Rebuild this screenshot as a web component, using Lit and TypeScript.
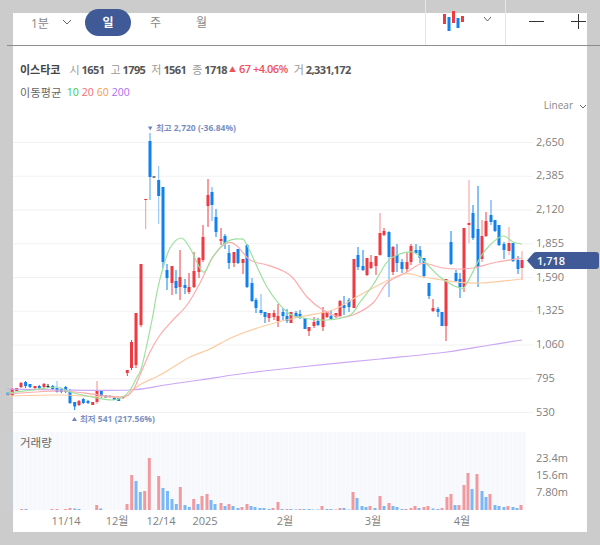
import { LitElement, html, css, svg } from 'lit';
import { customElement } from 'lit/decorators.js';

type Candle = [number, number, number, number, number, string, number?];

const R = '#ee3b42';
const B = '#1180f0';
const D = '#333333';

// x, body top, body bottom, wick top, wick bottom, colour, wick opacity
const candles: Candle[] = [
  [8, 392.5, 395, 392, 396, B], [12.3, 389, 395, 388, 396, R], [16.7, 388, 391, 388, 391, R],
  [21, 383, 387, 382, 388, R], [25.6, 382, 386, 381, 388, B], [30, 384, 387, 384, 388, B],
  [35, 386, 388, 386, 389, R], [39.3, 386, 388, 385, 389, B], [44, 384, 387, 383, 388, R],
  [48, 386, 387, 384, 388, D], [52.7, 386, 389, 385, 390, B], [57, 388, 392, 381, 393, B, 0.5],
  [61.3, 389, 392, 388, 393, B], [65.7, 387, 392, 386, 393, B], [70, 392, 403, 389, 404, B],
  [74.7, 402, 406.5, 402, 410, B], [79, 401, 405, 400, 406, R], [83.3, 399, 403, 398, 404, B],
  [88, 401, 403, 400, 404, B], [92.7, 402, 405, 402, 405, R], [97, 390, 402, 381, 404, R, 0.6],
  [101.3, 391, 396, 390, 398, B], [105.7, 395, 398, 395, 398, B], [110, 396, 397, 395, 398, B],
  [114.3, 397, 400, 397, 400, B], [118.7, 398, 401, 398, 401, B], [123, 396, 398, 396, 399, R],
  [127.3, 370, 373, 370, 376, R], [131.5, 342, 368, 340, 370, R], [136, 313, 365, 313, 368, R],
  [141, 264, 325, 264, 327, R], [145.7, 199, 200, 199, 229, R, 0.55], [150, 141, 177, 133, 200, B, 0.75],
  [154, 176.5, 177.5, 176.5, 177.5, D], [158.7, 180, 196, 166, 224, B, 0.5], [163, 187, 262, 187, 268, B],
  [167, 270, 278, 264, 290, B], [172, 266, 283, 266, 295, R], [176, 281, 288, 270, 294, B],
  [180, 277, 287, 250, 300, R], [185, 285, 288, 279, 294, B], [189, 287, 292, 273, 294, R],
  [194, 271, 287, 252, 288, R], [199, 258, 272, 257, 278, R], [203, 237, 260, 225, 262, R],
  [208, 195, 206, 179, 227, R], [212, 192, 205, 187, 221, B, 0.7], [216, 217, 232, 209, 237, B],
  [221, 239, 241, 228, 245, R], [225, 236, 244, 234, 249, B], [229, 253, 263, 245, 269, B],
  [234, 252, 263, 252, 267, R], [238, 249, 263, 249, 264, B], [243, 259, 263, 259, 274, R],
  [247, 245, 287, 244, 288, B], [252, 283, 301, 278, 302, B, 0.8], [256, 300, 308, 298, 313, B],
  [261, 310, 313, 294, 315, B, 0.6], [265, 312, 317, 312, 323, B], [269, 313, 318, 313, 322, R],
  [274, 313, 317, 310, 320, R], [278, 316, 321, 304, 327, R], [283, 312, 316, 308, 320, B],
  [287, 316, 321, 309, 323, B], [291, 312, 323, 312, 323, R], [296, 313, 317, 311, 318, B],
  [300, 314, 318, 310, 319, B], [305, 318, 329, 318, 329, B], [309, 327, 331, 327, 336, R],
  [314, 322, 326, 317, 328, R], [318, 321, 325, 318, 326, B], [323, 312, 327, 307, 331, R],
  [327, 311, 317, 311, 318, R], [331, 316, 319, 310, 319, B], [336, 313, 317, 313, 318, R],
  [340, 301, 316, 300, 316, R], [344, 305, 308, 296, 315, B], [349, 300, 307, 298, 312, B],
  [354, 259, 308, 259, 308, R], [358, 255, 267, 247, 270, B], [363, 266, 270, 250, 271, B],
  [367, 258, 275, 258, 276, R], [371, 262, 268, 255, 269, R], [376, 256, 266, 256, 275, R],
  [380, 233, 255, 213, 256, R, 0.6], [384, 231, 235, 228, 236, R], [389, 232, 257, 231, 297, B, 0.7],
  [393, 247, 272, 246, 275, R], [397, 255, 263, 244, 272, B], [402, 262, 269, 259, 273, B],
  [407, 262, 269, 253, 272, R], [411, 246, 262, 244, 265, R], [416, 250, 253, 244, 254, B],
  [420, 250, 258, 246, 263, B], [424, 258, 276, 258, 278, B], [429, 283, 296, 283, 299, B],
  [433, 308, 311, 299, 312, R], [438, 309, 312, 307, 317, B], [442, 312, 326, 312, 326, B],
  [446, 279, 326, 279, 341, R], [451, 242, 264, 231, 265, B], [456, 273, 281, 270, 282, B],
  [460, 279, 287, 273, 298, B], [464, 228, 287, 228, 292, R], [469, 223, 225, 180, 243, R, 0.5],
  [473, 213, 238, 205, 240, B], [478, 229, 267, 186, 287, B], [482, 236, 259, 220, 262, R, 0.7],
  [486, 221, 236, 212, 237, R], [491, 215, 222, 200, 225, B, 0.8], [495, 220, 231, 220, 232, B],
  [499, 225, 245, 225, 246, B], [504, 244, 250, 242, 259, B], [509, 243, 251, 227, 255, R, 0.5],
  [513, 243, 261, 243, 262, B], [518, 260, 269, 256, 274, B], [522, 260, 268, 251, 280, R, 0.5],
];

// x, height, r or b
const volumes: [number, number, string][] = [
  [21.7, 1, 'r'], [26, 1, 'b'], [52, 1, 'r'], [57, 1, 'r'], [65.7, 1, 'r'], [70, 2, 'r'], [74.7, 1.5, 'b'], [79, 1, 'b'],
  [96.7, 5, 'r'], [100.7, 1.5, 'b'], [127, 6, 'r'], [131.7, 35, 'r'], [136, 29, 'b'], [140.3, 18, 'b'], [144.7, 19, 'r'],
  [149.3, 52, 'r'], [158.7, 34, 'r'], [163, 22, 'b'], [167.5, 19, 'b'], [172, 11, 'b'], [176.3, 6, 'b'], [180.3, 23, 'r'],
  [185, 5, 'b'], [189.3, 3, 'b'], [193.7, 11, 'r'], [198, 6, 'b'], [202, 14, 'r'], [207, 16, 'r'], [211, 10, 'b'],
  [215, 6, 'b'], [221, 7, 'r'], [225, 4, 'b'], [229, 6, 'r'], [233, 4, 'b'], [238, 2, 'b'], [242, 3, 'r'], [247, 6, 'r'],
  [251, 4, 'b'], [255, 3, 'b'], [260, 2, 'b'], [264, 2, 'b'], [269, 1, 'b'], [273, 2, 'r'], [278, 8, 'r'], [282, 1, 'b'],
  [287, 1, 'r'], [291, 1, 'b'], [296, 0.5, 'b'], [300, 1, 'r'], [304, 1, 'b'], [309, 1, 'b'], [313, 0.5, 'b'], [318, 0.5, 'b'],
  [322, 4, 'r'], [327, 1, 'b'], [331, 1, 'b'], [336, 0.5, 'r'], [340, 2, 'r'], [344, 2, 'b'], [349, 0.5, 'b'], [353, 18, 'r'],
  [357, 12, 'b'], [362, 4, 'b'], [366, 3, 'b'], [370, 4, 'r'], [375, 2, 'b'], [380, 14, 'r'], [384, 4, 'b'], [389, 7, 'r'],
  [393, 4, 'b'], [397, 3, 'b'], [402, 1, 'b'], [406, 1, 'r'], [411, 2, 'r'], [415, 4, 'r'], [419, 2, 'b'], [424, 3, 'r'],
  [428, 4, 'r'], [433, 1.5, 'b'], [438, 1, 'b'], [442, 2, 'r'], [447, 13, 'r'], [451, 16, 'r'], [455, 5, 'b'], [459, 5, 'r'],
  [464, 25, 'r'], [468, 37, 'r'], [472, 21, 'b'], [477, 36, 'r'], [482, 19, 'b'], [486, 13, 'b'], [490, 16, 'r'], [495, 5, 'b'],
  [499, 4, 'b'], [504, 3, 'b'], [508, 4, 'r'], [513, 3, 'b'], [517, 2, 'b'], [521, 5, 'r'],
];

const ma10 = [[7, 393], [33, 390], [57, 387], [70, 392], [97, 398], [113, 400], [123, 397], [130, 390], [137, 377], [142, 366], [152, 320], [157, 292], [163, 268], [170, 248], [181, 238], [190, 248], [203, 272], [212, 258], [225, 243], [240, 239], [247, 245], [267, 287], [287, 312], [303, 318], [327, 320], [350, 315], [360, 302], [373, 285], [387, 262], [397, 255], [413, 252], [423, 260], [440, 277], [460, 288], [467, 283], [480, 258], [490, 245], [503, 236], [513, 242], [522, 244]];
const ma20 = [[7, 394], [60, 391], [100, 395], [123, 397], [133, 390], [140, 375], [150, 352], [160, 335], [173, 320], [187, 305], [200, 283], [213, 257], [227, 243], [237, 246], [250, 260], [267, 265], [283, 271], [293, 278], [307, 297], [323, 310], [340, 317], [353, 315], [373, 303], [387, 283], [407, 272], [420, 264], [428, 264], [443, 268], [457, 269], [473, 268], [497, 262], [522, 258]];
const ma60 = [[7, 396], [60, 395], [120, 397], [133, 389], [143, 383], [160, 375], [175, 366], [190, 357], [210, 349], [233, 337], [267, 325], [300, 317], [333, 310], [353, 299], [373, 288], [403, 274], [423, 277], [457, 282], [480, 283], [522, 279]];
const ma200 = [[7, 389], [60, 390], [130, 390], [165, 385], [200, 380], [240, 374], [300, 367], [380, 359], [447, 352], [490, 345], [522, 340]];

const priceTicks = [2650, 2385, 2120, 1855, 1590, 1325, 1060, 795, 530].map((v, i): [number, number] => [v, 142.5 + 33.75 * i]);
const dateTicks: [string, number][] = [['11/14', 66], ['12월', 117], ['12/14', 161], ['2025', 205], ['2월', 285], ['3월', 373], ['4월', 462]];
const volTicks: [string, number][] = [['23.4m', 458], ['15.6m', 475], ['7.80m', 492]];

// smooth line through the points
function smooth(p: number[][]) {
  let d = `M${p[0][0]} ${p[0][1]}`;
  for (let i = 0; i < p.length - 1; i++) {
    const a = p[Math.max(i - 1, 0)], b = p[i], c = p[i + 1], e = p[Math.min(i + 2, p.length - 1)];
    const c1 = [b[0] + (c[0] - a[0]) / 6, b[1] + (c[1] - a[1]) / 6];
    const c2 = [c[0] - (e[0] - b[0]) / 6, c[1] - (e[1] - b[1]) / 6];
    d += `C${c1[0].toFixed(1)} ${c1[1].toFixed(1)} ${c2[0].toFixed(1)} ${c2[1].toFixed(1)} ${c[0]} ${c[1]}`;
  }
  return d;
}

const chevron = (x: number, y: number, w: number, h: number) =>
  html`<svg class="chev" width=${w + 2} height=${h + 2} viewBox="0 0 ${w + 2} ${h + 2}" style="margin-left:${x}px;margin-top:${y}px"><path d="M1 1L${w / 2 + 1} ${h + 1}L${w + 1} 1" fill="none" stroke="#666" stroke-width="1"/></svg>`;

@customElement('app-root')
export class AppRoot extends LitElement {
  static styles = css`
    :host {
      display: block;
      width: 600px;
      height: 545px;
      background: #cccccc;
      overflow: hidden;
      font-family: "Open Sans", "Noto Sans CJK KR", sans-serif;
    }
    .panel {
      margin: 13px 13px 0;
      height: 519px;
      background: #fff;
      display: flex;
      flex-direction: column;
    }
    .toolbar {
      margin: -13px -13px 0 -6px;
      height: 45px;
      border-bottom: 1px solid #8a8d92;
      display: flex;
      color: #888;
      font-size: 12px;
      flex: none;
    }
    .tabs {
      width: 418px;
      display: flex;
      align-items: center;
      padding-left: 24px;
      box-sizing: border-box;
    }
    .tab-min { width: 25px; margin-top: 1px; }
    .pill {
      width: 46px;
      height: 27px;
      margin: -1px 0 0 13px;
      border-radius: 14px;
      background: #3f5a96;
      color: #fff;
      font-weight: 600;
      font-size: 12px;
      line-height: 27px;
      text-align: center;
    }
    .tab { font-size: 12px; margin-top: -1px; }
    .tab.w { margin-left: 19px; }
    .tab.m { margin-left: 35px; }
    .type {
      width: 81px;
      box-sizing: border-box;
      border-left: 1px solid #e6e6e6;
      border-right: 1px solid #e6e6e6;
      display: flex;
      padding: 11px 0 0 17px;
    }
    .zoom {
      flex: 1;
      display: flex;
      gap: 27px;
      padding: 14px 0 0 23px;
    }
    .chev { display: block; flex: none; }
    .info {
      display: flex;
      align-items: center;
      font-size: 11px;
      color: #999;
      height: 15px;
      margin: 15px 0 0 7px;
      white-space: nowrap;
    }
    .info b { color: #555; font-weight: 700; margin-left: 2px; letter-spacing: -0.6px; }
    .info .name { color: #444; margin: 0 9px 0 0; font-weight: 700; }
    .info .pair { margin-right: 6px; }
    .info .up { color: #f0505a; font-weight: 600; letter-spacing: -0.5px; }
    .info .tri { font-size: 7px; margin: 0 3px 0 -4px; letter-spacing: 0; }
    .ma {
      display: flex;
      gap: 3px;
      font-size: 10.5px;
      color: #666;
      height: 15px;
      align-items: center;
      margin: 8px 0 0 7px;
    }
    .ma .t { margin-right: 2px; font-size: 11px; letter-spacing: 0.3px; }
    .scale {
      display: flex;
      justify-content: flex-end;
      align-items: center;
      gap: 6px;
      font-size: 10px;
      color: #888;
      height: 14px;
      margin-top: -1px;
      padding-bottom: 1px;
    }
    .chart {
      margin-left: -13px;
      display: block;
      overflow: visible;
      flex: none;
    }
    text { font-family: "Open Sans", "Noto Sans CJK KR", sans-serif; }
    .axis { font-size: 11px; fill: #808080; }
    .mark { font-size: 8.5px; font-weight: 700; fill: #7b8fc2; }
    .vlabel { font-size: 11.5px; fill: #666; }
    .tag { font-size: 11px; font-weight: 600; fill: #fff; }
  `;

  private renderChart() {
    const stripes = [];
    for (let x = 7; x < 524; x += 4.4) stripes.push(svg`<rect x=${x} y="432" width="3.9" height="78" fill="rgba(200,215,240,0.17)"/>`);
    return html`<svg class="chart" width="600" height="419" viewBox="0 113 600 419">
      ${priceTicks.map(([, y]) => svg`<line x1="13" x2="533" y1=${y} y2=${y} stroke="#f2f2f4"/>`)}
      ${stripes}
      ${volumes.map(([x, h, c]) => svg`<rect x=${x - 1.5} y=${510 - h} width="3" height=${h} fill=${c === 'r' ? '#f09aa0' : '#7ab8f7'}/>`)}
      ${candles.map(([x, top, bot, hi, lo, c, op]) => svg`
        <line x1=${x} x2=${x} y1=${hi} y2=${lo} stroke=${c} stroke-opacity=${op ?? 1}/>
        <rect x=${x - 1.5} y=${top} width="3" height=${bot - top} fill=${c}/>`)}
      <path d=${smooth(ma200)} fill="none" stroke="#cda6f5" stroke-width="1.2"/>
      <path d=${smooth(ma60)} fill="none" stroke="#fccba0" stroke-width="1.2"/>
      <path d=${smooth(ma20)} fill="none" stroke="#ffabae" stroke-width="1.2"/>
      <path d=${smooth(ma10)} fill="none" stroke="#9ce09e" stroke-width="1.2"/>
      <path d="M148 126.5H152.5L150.2 130.5Z" fill="#6f84ba"/>
      <text class="mark" x="156" y="131">최고 2,720 (-36.84%)</text>
      <path d="M72 421H77L74.5 417Z" fill="#6f84ba"/>
      <text class="mark" x="80" y="422">최저 541 (217.56%)</text>
      ${priceTicks.map(([v, y]) => svg`<text class="axis" x="536" y=${y + 3}>${v.toLocaleString('en-US')}</text>`)}
      <path d="M527 260.5L533 253.5Q534 252 536 252H596Q599 252 599 255V266Q599 269 596 269H536Q534 269 533 267.5Z" fill="#3f5a96"/>
      <text class="tag" x="537" y="265">1,718</text>
      <text class="vlabel" x="20" y="447">거래량</text>
      ${volTicks.map(([t, y]) => svg`<text class="axis" x="536" y=${y + 3.5}>${t}</text>`)}
      ${dateTicks.map(([t, x]) => svg`<text class="axis" x=${x} y="525" text-anchor="middle">${t}</text>`)}
    </svg>`;
  }

  render() {
    return html`<div class="panel">
      <div class="toolbar">
        <div class="tabs">
          <span class="tab-min">1분</span>
          ${chevron(6, -1, 8, 4)}
          <div class="pill">일</div>
          <span class="tab w">주</span>
          <span class="tab m">월</span>
        </div>
        <div class="type">
          <svg width="22" height="22" viewBox="0 0 22 22">
            <rect x="0" y="3" width="3" height="10" fill="#ee3b42"/>
            <rect x="4.5" y="6" width="3" height="14" fill="#1180f0"/>
            <rect x="9" y="0" width="3" height="12" fill="#ee3b42"/>
            <rect x="13.5" y="7" width="3" height="10" fill="#1180f0"/>
            <rect x="18" y="5" width="3" height="6" fill="#ee3b42"/>
          </svg>
          ${chevron(18, 5, 7, 4)}
        </div>
        <div class="zoom">
          <svg width="15" height="15" viewBox="0 0 15 15"><path d="M0 7.5H15" stroke="#333" stroke-width="1"/></svg>
          <svg width="15" height="15" viewBox="0 0 15 15"><path d="M0 7.5H15M7.5 0V15" stroke="#333" stroke-width="1"/></svg>
        </div>
      </div>
      <div class="info">
        <span class="name">이스타코</span>
        <span class="pair">시<b>1651</b></span>
        <span class="pair">고<b>1795</b></span>
        <span class="pair">저<b>1561</b></span>
        <span class="pair">종<b>1718</b></span>
        <span class="up tri">▲</span>
        <span class="up pair">67 +4.06%</span>
        <span class="pair">거<b>2,331,172</b></span>
      </div>
      <div class="ma">
        <span class="t">이동평균</span>
        <span style="color:#3ac946">10</span>
        <span style="color:#f56a72">20</span>
        <span style="color:#f79c45">60</span>
        <span style="color:#a96cf2">200</span>
      </div>
      <div class="scale">
        <span>Linear</span>
        ${chevron(0, 2, 6, 3)}
      </div>
      ${this.renderChart()}
    </div>`;
  }
}
